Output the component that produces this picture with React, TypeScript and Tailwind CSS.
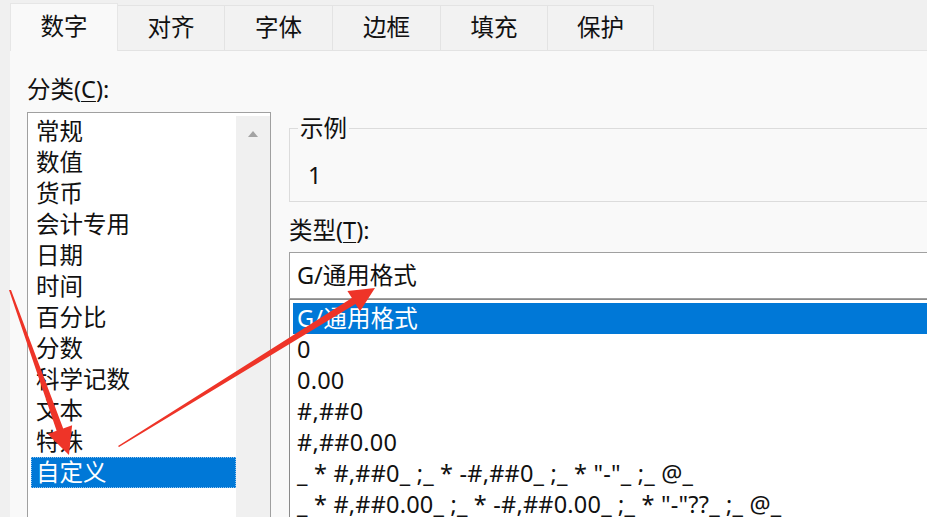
export default function App() {
  const tabs = [
    { t: "数字", w: "w-[108px]" },
    { t: "对齐", w: "w-[107px]" },
    { t: "字体", w: "w-[108px]" },
    { t: "边框", w: "w-[108px]" },
    { t: "填充", w: "w-[107px]" },
    { t: "保护", w: "w-[106px]" },
  ];
  const cats = ["常规", "数值", "货币", "会计专用", "日期", "时间", "百分比", "分数", "科学记数", "文本", "特殊", "自定义"];
  const types = [
    "G/通用格式",
    "0",
    "0.00",
    "#,##0",
    "#,##0.00",
    '_ * #,##0_ ;_ * -#,##0_ ;_ * "-"_ ;_ @_',
    '_ * #,##0.00_ ;_ * -#,##0.00_ ;_ * "-"??_ ;_ @_',
  ];
  return (
    <div className="relative w-[927px] h-[517px] overflow-hidden bg-[#f0f0f0] font-['Noto_Sans','Noto_Sans_CJK_SC',sans-serif] text-[23.5px] text-[#111]">
      {/* tabs */}
      <div className="flex items-end h-[50px] pl-[10px]">
        {tabs.map((tab, i) =>
          i === 0 ? (
            <div
              key={tab.t}
              className={`relative z-10 -mb-px h-[48px] ${tab.w} flex items-center justify-center bg-[#f9f9f9] border-t border-l border-r border-[#e6e6e6] pb-[1px]`}
            >
              {tab.t}
            </div>
          ) : (
            <div
              key={tab.t}
              className={`h-[45px] ${tab.w} flex items-center justify-center bg-[#f2f2f2] border-t border-r border-[#e3e3e3]`}
            >
              {tab.t}
            </div>
          )
        )}
      </div>
      {/* panel */}
      <div className="ml-[10px] h-[467px] overflow-hidden bg-[#f9f9f9] border-t border-[#e3e3e3] flex items-start pl-[17px] gap-[18px]">
        {/* left column */}
        <div className="shrink-0 flex flex-col pt-[25px]">
          <div className="shrink-0 leading-[26px] whitespace-nowrap">
            分类(<span className="underline underline-offset-[3px] decoration-1">C</span>):
          </div>
          <div className="shrink-0 mt-[10px] w-[244px] h-[420px] border border-[#a0a0a0] bg-white flex">
            <div className="w-[210px] pl-[3px] pt-[3px] flex flex-col">
              {cats.map((c) =>
                c === "自定义" ? (
                  <div
                    key={c}
                    className="shrink-0 h-[31px] leading-[30px] pl-[5px] bg-[#0078d7] text-white outline-dotted outline-1 -outline-offset-1 outline-[#8fc2ee] whitespace-nowrap"
                  >
                    {c}
                  </div>
                ) : (
                  <div key={c} className="shrink-0 h-[31px] leading-[31px] pl-[5px] whitespace-nowrap">
                    {c}
                  </div>
                )
              )}
            </div>
            <div className="w-[34px] mt-[3px] bg-[#f0f0f0] flex flex-col items-center">
              <svg width="12" height="8" viewBox="0 0 12 8" className="mt-[14px]">
                <polygon points="6,1 11,7 1,7" fill="#a3a3a3" />
              </svg>
            </div>
          </div>
        </div>
        {/* right column */}
        <div className="shrink-0 w-[700px] flex flex-col pt-[64px]">
          <fieldset className="shrink-0 border border-[#dcdcdc] pb-[13px]">
            <legend className="ml-[8px] px-[2px] leading-[26px]">示例</legend>
            <div className="mt-[21px] ml-[18px] leading-[26px]">1</div>
          </fieldset>
          <div className="shrink-0 mt-[15px] leading-[26px] whitespace-nowrap">
            类型(<span className="underline underline-offset-[3px] decoration-1">T</span>):
          </div>
          <div className="shrink-0 mt-[9px] h-[47px] border border-[#a0a0a0] bg-white flex items-center pl-[7px] whitespace-nowrap">
            G/通用格式
          </div>
          <div className="shrink-0 h-[230px] border border-[#8a8a8a] bg-white pt-[3px] pl-[3px]">
            {types.map((t, i) => (
              <div
                key={i}
                className={`h-[31px] leading-[31px] pl-[4px] whitespace-pre tracking-[0.2px] ${i === 0 ? "bg-[#0078d7] text-white" : ""}`}
              >
                {t}
              </div>
            ))}
          </div>
        </div>
      </div>
      {/* annotation arrows */}
      <svg className="absolute inset-0 pointer-events-none z-20" width="927" height="517" viewBox="0 0 927 517">
        <polygon
          points="9,290 11,290 63.2,428.4 72.1,425.2 69,455 47.7,434 56.6,430.8"
          fill="#ee3428"
        />
        <polygon
          points="118,446 351.9,298.1 347.4,290.9 375,288 360,311.3 355.5,304.1 119,447"
          fill="#ee3428"
        />
      </svg>
    </div>
  );
}
